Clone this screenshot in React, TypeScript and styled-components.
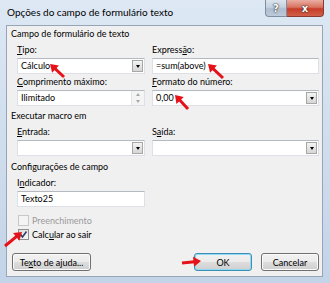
import React from "react";
import styled, { createGlobalStyle } from "styled-components";

const GlobalStyle = createGlobalStyle`
  html, body {
    margin: 0;
    padding: 0;
  }
  body {
    width: 330px;
    height: 283px;
    overflow: hidden;
    font-family: Lato, "Liberation Sans", sans-serif;
    font-size: 9px;
    color: #000;
    background: #c5d6ea;
  }
`;

const Window = styled.div`
  position: relative;
  width: 330px;
  height: 283px;
  box-sizing: border-box;
  display: flex;
  flex-direction: column;
  padding: 0 7px 6px 6px;
  background: linear-gradient(180deg, #dde8f4 0%, #d2dfee 40%, #c3d4e8 100%);
`;

const TitleBar = styled.div`
  height: 25px;
  display: flex;
  justify-content: space-between;
  align-items: flex-start;
`;

const Title = styled.div`
  padding: 6px 0 0 1px;
  font-size: 10px;
  line-height: 12px;
  color: #000;
`;

const Controls = styled.div`
  display: flex;
  margin-right: -1px;
`;

const CaptionButton = styled.div<{ $close?: boolean }>`
  height: 17px;
  box-sizing: border-box;
  width: ${(p) => (p.$close ? "37px" : "22px")};
  display: flex;
  align-items: center;
  justify-content: center;
  border: 1px solid ${(p) => (p.$close ? "#8a3a30" : "#7f8fa3")};
  border-top: none;
  border-left: ${(p) => (p.$close ? "none" : undefined)};
  border-radius: ${(p) => (p.$close ? "0 0 4px 0" : "0 0 0 4px")};
  background: ${(p) =>
    p.$close
      ? "linear-gradient(180deg, #e9aea3 0%, #d9735f 45%, #c73c28 55%, #d0604a 100%)"
      : "linear-gradient(180deg, #dce5ef 0%, #c4d1df 45%, #aebdcf 55%, #bccadb 100%)"};
  color: #fff;
  font-family: "DejaVu Sans", sans-serif;
  font-weight: bold;
  font-size: 10px;
  text-shadow: 0 0 2px #333, 0 0 1px #000;
`;

const Client = styled.div`
  flex: 1;
  display: flex;
  flex-direction: column;
  background: #f0f0f0;
  border: 1px solid #97a5b7;
  padding: 0 3px 0 4px;
`;

const SectionHeader = styled.div<{ $gap?: number }>`
  height: 16px;
  line-height: 16px;
  margin-top: ${(p) => p.$gap ?? 0}px;
`;

const FieldGrid = styled.div`
  display: grid;
  grid-template-columns: 128px 167px;
  column-gap: 7px;
  margin-left: 6px;
`;

const Field = styled.div`
  display: flex;
  flex-direction: column;
`;

const Label = styled.div`
  height: 16px;
  line-height: 16px;
`;

const Key = styled.span`
  text-decoration: underline;
`;

const Box = styled.div`
  position: relative;
  height: 16px;
  box-sizing: border-box;
  display: flex;
  align-items: center;
  background: #fff;
  border: 1px solid #dde1e7;
  border-top-color: #b4b9c1;
  padding-left: 3px;
`;

const BoxText = styled.span`
  flex: 1;
  line-height: 14px;
`;

const DropButton = styled.div`
  width: 11px;
  height: 12px;
  margin-right: 1px;
  box-sizing: border-box;
  border: 1px solid #a7a7a7;
  background: linear-gradient(180deg, #f4f4f4 0%, #e4e4e4 50%, #d6d6d6 100%);
  display: flex;
  align-items: center;
  justify-content: center;
  &::after {
    content: "";
    border-left: 2.5px solid transparent;
    border-right: 2.5px solid transparent;
    border-top: 3px solid #000;
  }
`;

const Spinner = styled.div`
  width: 12px;
  height: 14px;
  display: flex;
  flex-direction: column;
  border-left: 1px solid #e4e4e4;
  background: #f4f4f4;
`;

const SpinHalf = styled.div<{ $up?: boolean }>`
  flex: 1;
  display: flex;
  align-items: center;
  justify-content: center;
  &::after {
    content: "";
    border-left: 2.5px solid transparent;
    border-right: 2.5px solid transparent;
    ${(p) => (p.$up ? "border-bottom: 3px solid #a8a8a8;" : "border-top: 3px solid #a8a8a8;")}
  }
`;

const Checks = styled.div`
  margin: 6px 0 0 7px;
  display: flex;
  flex-direction: column;
`;

const CheckRow = styled.div<{ $disabled?: boolean }>`
  height: 14px;
  display: flex;
  align-items: center;
  gap: 3px;
  color: ${(p) => (p.$disabled ? "#9a9a9a" : "#000")};
`;

const CheckBox = styled.div<{ $disabled?: boolean }>`
  width: 11px;
  height: 11px;
  box-sizing: border-box;
  border: 1px solid ${(p) => (p.$disabled ? "#c8c8c8" : "#8f8f8f")};
  background: ${(p) =>
    p.$disabled ? "#f4f4f4" : "linear-gradient(135deg, #dcdcdc 0%, #f8f8f8 100%)"};
  display: flex;
  align-items: center;
  justify-content: center;
`;

const ButtonRow = styled.div`
  margin-top: 12px;
  display: flex;
  justify-content: space-between;
  padding-left: 1px;
`;

const RightButtons = styled.div`
  display: flex;
  gap: 9px;
`;

const Button = styled.div<{ $width: number; $focused?: boolean }>`
  width: ${(p) => p.$width}px;
  height: 18px;
  box-sizing: border-box;
  display: flex;
  align-items: center;
  justify-content: center;
  border: 1px solid ${(p) => (p.$focused ? "#3c8fb5" : "#707070")};
  border-radius: 3px;
  background: linear-gradient(180deg, #f2f2f2 0%, #ebebeb 48%, #dddddd 52%, #cfcfcf 100%);
  box-shadow: ${(p) =>
    p.$focused ? "inset 0 0 0 1px #8fd9f3" : "inset 0 0 0 1px #fbfbfb"};
`;

const Overlay = styled.svg`
  position: absolute;
  left: 0;
  top: 0;
  width: 330px;
  height: 283px;
  pointer-events: none;
`;

type Pt = [number, number];

function Arrow({ tip, tail }: { tip: Pt; tail: Pt }) {
  const dx = tip[0] - tail[0];
  const dy = tip[1] - tail[1];
  const len = Math.hypot(dx, dy);
  const ux = dx / len;
  const uy = dy / len;
  const head = 7.5;
  const half = 5;
  const bx = tip[0] - ux * head;
  const by = tip[1] - uy * head;
  const pts = [
    `${tip[0]},${tip[1]}`,
    `${bx - uy * half},${by + ux * half}`,
    `${bx + uy * half},${by - ux * half}`,
  ].join(" ");
  return (
    <g>
      <line
        x1={tail[0]}
        y1={tail[1]}
        x2={bx + ux * 1}
        y2={by + uy * 1}
        stroke="#e5121a"
        strokeWidth={3}
      />
      <polygon points={pts} fill="#e5121a" />
    </g>
  );
}

const arrows: { tip: Pt; tail: Pt }[] = [
  { tip: [50, 64], tail: [64, 77] },
  { tip: [208, 64], tail: [223, 78] },
  { tip: [175, 95], tail: [188, 109] },
  { tip: [22, 232], tail: [5, 246] },
  { tip: [201, 261], tail: [182, 263] },
];

export default function App() {
  return (
    <>
      <GlobalStyle />
      <Window>
        <TitleBar>
          <Title>Opções do campo de formulário texto</Title>
          <Controls>
            <CaptionButton>?</CaptionButton>
            <CaptionButton $close>x</CaptionButton>
          </Controls>
        </TitleBar>
        <Client>
          <SectionHeader>Campo de formulário de texto</SectionHeader>
          <FieldGrid>
            <Field>
              <Label>
                <Key>T</Key>ipo:
              </Label>
              <Box>
                <BoxText>Cálculo</BoxText>
                <DropButton />
              </Box>
            </Field>
            <Field>
              <Label>
                Express<Key>ã</Key>o:
              </Label>
              <Box>
                <BoxText>=sum(above)</BoxText>
              </Box>
            </Field>
            <Field>
              <Label>
                <Key>C</Key>omprimento máximo:
              </Label>
              <Box>
                <BoxText>Ilimitado</BoxText>
                <Spinner>
                  <SpinHalf $up />
                  <SpinHalf />
                </Spinner>
              </Box>
            </Field>
            <Field>
              <Label>
                <Key>F</Key>ormato do número:
              </Label>
              <Box>
                <BoxText>0,00</BoxText>
                <DropButton />
              </Box>
            </Field>
          </FieldGrid>
          <SectionHeader $gap={2}>Executar macro em</SectionHeader>
          <FieldGrid>
            <Field>
              <Label>
                <Key>E</Key>ntrada:
              </Label>
              <Box>
                <BoxText />
                <DropButton />
              </Box>
            </Field>
            <Field>
              <Label>
                S<Key>a</Key>ída:
              </Label>
              <Box>
                <BoxText />
                <DropButton />
              </Box>
            </Field>
          </FieldGrid>
          <SectionHeader $gap={3}>Configurações de campo</SectionHeader>
          <FieldGrid>
            <Field>
              <Label>
                I<Key>n</Key>dicador:
              </Label>
              <Box>
                <BoxText>Texto25</BoxText>
              </Box>
            </Field>
          </FieldGrid>
          <Checks>
            <CheckRow $disabled>
              <CheckBox $disabled />
              <span>Preenchimento</span>
            </CheckRow>
            <CheckRow>
              <CheckBox>
                <svg width="9" height="9" viewBox="0 0 9 9">
                  <path d="M1.5 4.5 L3.5 7 L7.5 1.5" fill="none" stroke="#2a3f6b" strokeWidth="1.6" />
                </svg>
              </CheckBox>
              <span>
                Calc<Key>u</Key>lar ao sair
              </span>
            </CheckRow>
          </Checks>
          <ButtonRow>
            <Button $width={79}>
              <span>
                Te<Key>x</Key>to de ajuda...
              </span>
            </Button>
            <RightButtons>
              <Button $width={58} $focused>
                OK
              </Button>
              <Button $width={58}>Cancelar</Button>
            </RightButtons>
          </ButtonRow>
        </Client>
        <Overlay viewBox="0 0 330 283">
          {arrows.map((a, i) => (
            <Arrow key={i} tip={a.tip} tail={a.tail} />
          ))}
        </Overlay>
      </Window>
    </>
  );
}
